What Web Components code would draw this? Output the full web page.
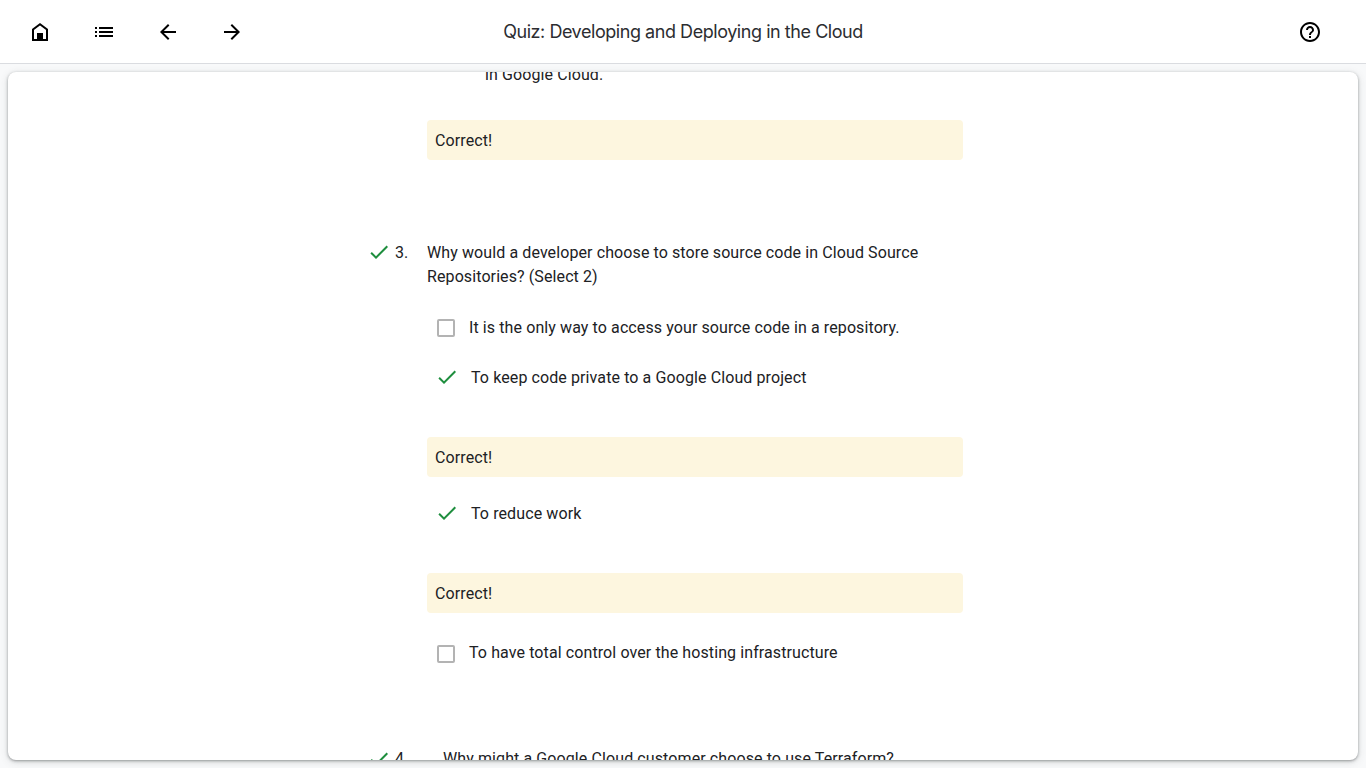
<!DOCTYPE html>
<html lang="en">
<head>
<meta charset="utf-8">
<title>Quiz: Developing and Deploying in the Cloud</title>
<style>
html,body{margin:0;height:100%;overflow:hidden;background:#f8f9fa}
body{font:400 16px/24px Roboto,"Liberation Sans",sans-serif;letter-spacing:.1px;color:#202124}
</style>
</head>
<body>
<quiz-app>
  <quiz-header slot="header">Quiz: Developing and Deploying in the Cloud</quiz-header>
  <quiz-continuation>in Google Cloud.</quiz-continuation>
  <quiz-feedback style="margin-top:33px">Correct!</quiz-feedback>
  <quiz-question number="3." style="margin-top:81px">
    <span slot="prompt">Why would a developer choose to store source code in Cloud Source Repositories? (Select 2)</span>
    <quiz-option style="margin-top:27px">It is the only way to access your source code in a repository.</quiz-option>
    <quiz-option correct style="margin-top:26px">To keep code private to a Google Cloud project</quiz-option>
    <quiz-feedback style="margin-top:47px">Correct!</quiz-feedback>
    <quiz-option correct style="margin-top:25px">To reduce work</quiz-option>
    <quiz-feedback style="margin-top:47px">Correct!</quiz-feedback>
    <quiz-option low style="margin-top:28px">To have total control over the hosting infrastructure</quiz-option>
  </quiz-question>
  <quiz-question number="4." inset style="margin-top:82px">
    <span slot="prompt">Why might a Google Cloud customer choose to use Terraform?</span>
  </quiz-question>
</quiz-app>
<script>
function define(name, html) {
  const template = document.createElement('template');
  template.innerHTML = html;
  customElements.define(name, class extends HTMLElement {
    constructor() {
      super();
      this.attachShadow({mode: 'open'}).append(template.content.cloneNode(true));
    }
    connectedCallback() {
      const number = this.shadowRoot.querySelector('.number');
      if (number) number.textContent = this.getAttribute('number');
    }
  });
}
define('quiz-app', `<style>
:host{display:flex;flex-direction:column;height:100vh}
main{flex:1;min-height:0;margin:8px;background:#fff;border-radius:8px;overflow:hidden;box-shadow:0 1px 2px rgba(60,64,67,.3),0 1px 3px 1px rgba(60,64,67,.15),0 2px 8px rgba(60,64,67,.15)}
.content{width:536px;margin:-9px 0 0 419px}
</style><slot name="header"></slot><main><div class="content"><slot></slot></div></main>`);
define('quiz-header', `<style>
:host{display:grid;grid-template-columns:1fr auto 1fr;align-items:center;box-sizing:border-box;height:64px;flex:none;padding:0 44px 0 28px;background:#fff;border-bottom:1px solid #dadce0}
nav{display:flex;gap:40px}
h1{margin:0 0 0 16px;font:400 18px/24px "Inter","Open Sans",sans-serif;letter-spacing:-.45px;color:#2c2d31;white-space:nowrap}
nav:last-child{justify-content:flex-end}
</style>
<nav><nav-icon name="home"></nav-icon><nav-icon name="list"></nav-icon><nav-icon name="back"></nav-icon><nav-icon name="next"></nav-icon></nav>
<h1><slot></slot></h1><nav><nav-icon name="help"></nav-icon></nav>`);
define('quiz-continuation', `<style>:host{display:block;padding-left:58px}</style><slot></slot>`);
define('quiz-feedback', `<style>:host{display:block;box-sizing:border-box;height:40px;padding:9px 8px 7px;border-radius:4px;background:#fdf6df}</style><slot></slot>`);
define('quiz-question', `<style>
:host{display:block}
.head{display:flex;margin-left:-60px}
nav-icon{flex:none;margin:-1px 4px 0 0}
:host([inset]) nav-icon{margin-top:0}
.number{width:32px;flex:none}
.prompt{flex:1}
:host([inset]) .prompt{padding-left:16px}
</style><div class="head"><nav-icon name="check"></nav-icon><span class="number"></span><div class="prompt"><slot name="prompt"></slot></div></div><slot></slot>`);
define('quiz-option', `<style>
:host{display:flex;align-items:center;height:24px;padding-left:10px}
.box{box-sizing:border-box;width:18px;height:18px;border:2px solid #b3b3b3;border-radius:2px;margin-right:14px}
nav-icon{display:none;margin:-2px 12px 0 -2px}
:host([correct]) .box{display:none}
:host([correct]) nav-icon{display:block}
:host([low]) .box{margin-top:2px}
</style><span class="box"></span><nav-icon name="check"></nav-icon><slot></slot>`);
const paths = {
  home: '<path fill="none" stroke="currentColor" stroke-width="2" d="M5 20V9.5l7-5.3 7 5.3V20Z"/><path d="M9 13h6v7H9z"/>',
  list: '<path d="M3 7h2v2H3zm0 4h2v2H3zm0 4h2v2H3zM7 7h14v2H7zm0 4h14v2H7zm0 4h14v2H7z"/>',
  back: '<path d="M20 11H7.83l5.59-5.59L12 4l-8 8 8 8 1.41-1.41L7.83 13H20z"/>',
  next: '<path d="M12 4l-1.41 1.41L16.17 11H4v2h12.17l-5.58 5.59L12 20l8-8z"/>',
  help: '<path d="M11 18h2v-2h-2v2zm1-16C6.48 2 2 6.48 2 12s4.48 10 10 10 10-4.48 10-10S17.52 2 12 2zm0 18c-4.41 0-8-3.59-8-8s3.59-8 8-8 8 3.59 8 8-3.59 8-8 8zm0-14c-2.21 0-4 1.79-4 4h2c0-1.1.9-2 2-2s2 .9 2 2c0 2-3 1.75-3 5h2c0-2.25 3-2.5 3-5 0-2.21-1.79-4-4-4z"/>',
  check: '<path fill="#1e8e3e" d="M9 16.17L4.83 12l-1.42 1.41L9 19 21 7l-1.41-1.41z"/>'
};
customElements.define('nav-icon', class extends HTMLElement {
  connectedCallback() {
    if (this.shadowRoot) return;
    this.attachShadow({mode: 'open'}).innerHTML =
      `<style>:host{display:block;width:24px;height:24px;color:#000}svg{display:block;fill:currentColor}</style><svg width="24" height="24" viewBox="0 0 24 24">${paths[this.getAttribute('name')]}</svg>`;
  }
});
</script>
</body>
</html>
